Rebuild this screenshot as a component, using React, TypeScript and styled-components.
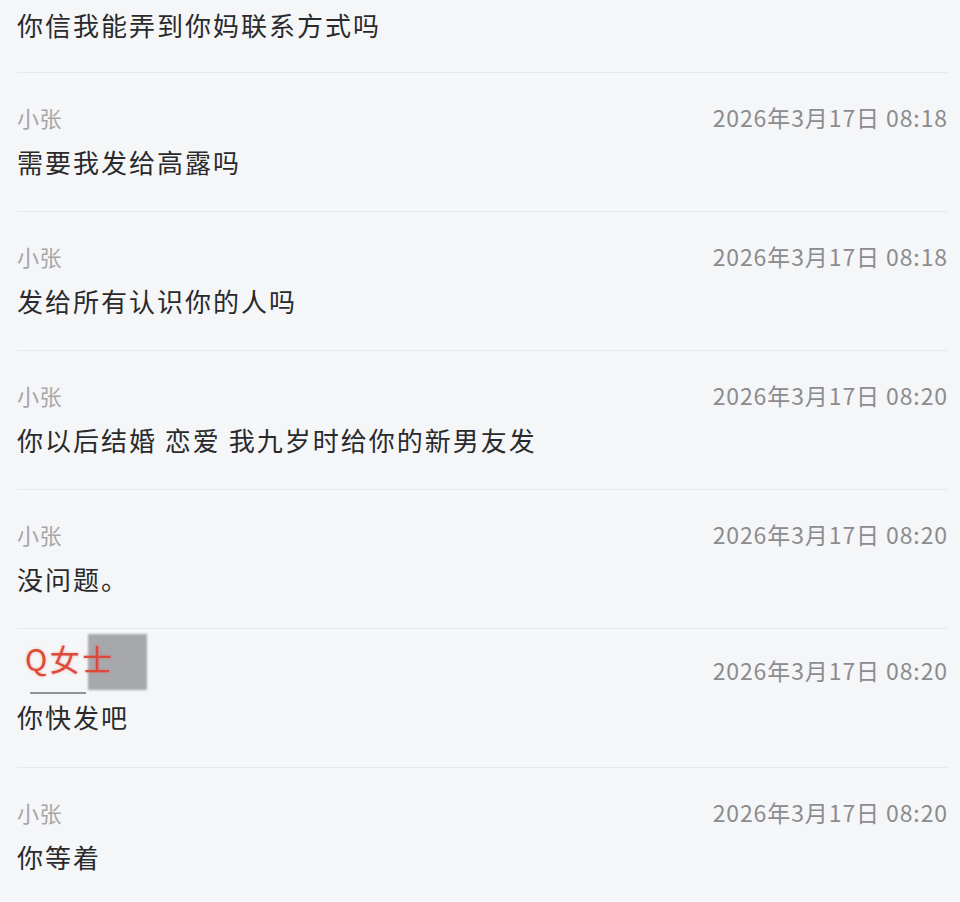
import styled, { createGlobalStyle } from "styled-components";

const Global = createGlobalStyle`
  html, body {
    margin: 0;
    padding: 0;
    background: #f5f6f8;
  }
  body {
    font-family: "Noto Sans CJK SC", "Noto Sans", sans-serif;
  }
`;

const List = styled.main`
  width: 960px;
  height: 902px;
  overflow: hidden;
  box-sizing: border-box;
  padding: 0 13px 0 17px;
  background: #f5f6f8;
`;

const Row = styled.section<{ $first?: boolean; $tall?: boolean }>`
  display: flex;
  flex-direction: column;
  padding: ${(p) => (p.$first ? "7px 0 29px" : p.$tall ? "3px 0 32px" : "29px 0 31px")};
  border-bottom: 1px solid #e7e8eb;
  gap: ${(p) => (p.$tall ? "4px" : "12px")};
`;

const Header = styled.div<{ $tall?: boolean }>`
  display: flex;
  justify-content: space-between;
  align-items: ${(p) => (p.$tall ? "flex-end" : "center")};
  height: ${(p) => (p.$tall ? "63px" : "30px")};
`;

const Name = styled.span`
  font-size: 22px;
  line-height: 30px;
  color: #a6a6a8;
  letter-spacing: 0.5px;
`;

const Time = styled.span<{ $tall?: boolean }>`
  font-size: 23px;
  line-height: 30px;
  color: #8c8c8f;
  letter-spacing: 0.9px;
  margin-right: -1px;
  margin-bottom: ${(p) => (p.$tall ? "10px" : "0")};
`;

const Message = styled.p`
  margin: 0;
  font-size: 26px;
  line-height: 36px;
  color: #2a2a2c;
  letter-spacing: 2px;
`;

const Tag = styled.div`
  position: relative;
  width: 135px;
  height: 63px;
`;

const TagText = styled.span`
  position: absolute;
  left: 8px;
  top: 8px;
  font-size: 30px;
  line-height: 36px;
  color: #dc4a3a;
  letter-spacing: 2.5px;
  text-shadow: 0 0 3px rgba(235, 90, 70, 0.45);
`;

const Mask = styled.span`
  position: absolute;
  left: 71px;
  top: 2px;
  width: 59px;
  height: 56px;
  background: #a7a8ac;
  filter: blur(1.2px);
`;

const Underline = styled.span`
  position: absolute;
  left: 13px;
  top: 60px;
  width: 56px;
  height: 2px;
  background: #8f949c;
  filter: blur(0.6px);
`;

type Msg = { name?: string; time?: string; text: string; tag?: boolean };

const messages: Msg[] = [
  { text: "你信我能弄到你妈联系方式吗" },
  { name: "小张", time: "2026年3月17日 08:18", text: "需要我发给高露吗" },
  { name: "小张", time: "2026年3月17日 08:18", text: "发给所有认识你的人吗" },
  { name: "小张", time: "2026年3月17日 08:20", text: "你以后结婚 恋爱 我九岁时给你的新男友发" },
  { name: "小张", time: "2026年3月17日 08:20", text: "没问题。" },
  { tag: true, time: "2026年3月17日 08:20", text: "你快发吧" },
  { name: "小张", time: "2026年3月17日 08:20", text: "你等着" },
];

const App = () => {
  return (
    <>
      <Global />
      <List>
        {messages.map((m, i) => (
          <Row key={i} $first={i === 0} $tall={m.tag}>
            {m.time && (
              <Header $tall={m.tag}>
                {m.tag ? (
                  <Tag>
                    <Mask />
                    <TagText>Q女士</TagText>
                    <Underline />
                  </Tag>
                ) : (
                  <Name>{m.name}</Name>
                )}
                <Time $tall={m.tag}>{m.time}</Time>
              </Header>
            )}
            <Message>{m.text}</Message>
          </Row>
        ))}
      </List>
    </>
  );
};

export default App;
